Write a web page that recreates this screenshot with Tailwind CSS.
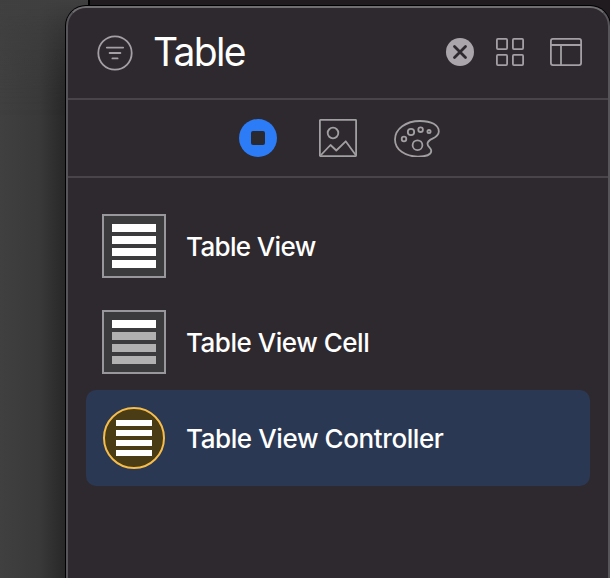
<!DOCTYPE html>
<html lang="en">
<head>
<meta charset="utf-8">
<title>Object Library</title>
<script src="https://cdn.jsdelivr.net/npm/@tailwindcss/browser@4"></script>
</head>
<body class="h-[578px] w-[610px] overflow-hidden bg-[#1f1b1e] font-['Inter','Liberation_Sans',sans-serif] text-white">
<div class="relative flex h-[578px] w-[610px] overflow-hidden">
  <div class="h-full w-[90px] border-r-2 border-black bg-linear-to-r from-[#404040] via-[#393939] via-45% to-[#272727] to-75%"></div>
  <div class="absolute left-0 top-0 h-[120px] w-[88px] bg-linear-to-b from-[#404040] to-transparent mask-b-from-0%"></div>
  <main class="absolute left-[66px] top-[6px] flex h-[600px] w-[544px] flex-col rounded-[20px] border-2 border-[#57545a] border-t-[#716e72] bg-[#2e292e] shadow-[0_0_0_1px_#000]">
    <header class="flex h-[92px] items-center border-b-2 border-[#48444a] pl-[28px] pr-[26px]">
      <svg class="size-[38px]" viewBox="0 0 38 38" fill="none" stroke="#a39fa4" stroke-width="1.8" stroke-linecap="round"><circle cx="19" cy="19" r="16.7"/><path d="M10.8 13.6h16.4M13.6 19h10.8M16.4 24.4h5.2"/></svg>
      <span class="ml-[19px] pb-[2px] text-[39px] leading-[48px] tracking-[-1.7px]">Table</span>
      <div class="ml-auto flex items-center pb-[2px]">
        <svg class="size-[28px]" viewBox="0 0 28 28"><circle cx="14" cy="14" r="14" fill="#aaa5ab"/><path d="M8.500 8.500l11 11M19.500 8.500l-11 11" stroke="#2e292e" stroke-width="2.8" stroke-linecap="round"/></svg>
        <svg class="ml-[22px] size-[28px]" viewBox="0 0 28 28" fill="none" stroke="#a39fa4" stroke-width="1.8"><rect x=".9" y=".9" width="10.200" height="10.200" rx="1"/><rect x="16.900" y=".9" width="10.200" height="10.200" rx="1"/><rect x=".9" y="16.900" width="10.200" height="10.200" rx="1"/><rect x="16.900" y="16.900" width="10.200" height="10.200" rx="1"/></svg>
        <svg class="ml-[26px] h-[28px] w-[32px]" viewBox="0 0 32 28" fill="none" stroke="#a39fa4" stroke-width="1.8"><rect x=".9" y=".9" width="30.200" height="26.200" rx="2"/><path d="M1 7h30M11 7v20"/></svg>
      </div>
    </header>
    <nav class="flex h-[78px] items-center gap-[42px] border-b-2 border-[#48444a] pl-[171px]">
      <div class="flex size-[38px] items-center justify-center rounded-full bg-[#2d7cf7]"><div class="size-[14px] rounded-[2px] bg-[#2b2930]"></div></div>
      <svg class="size-[38px]" viewBox="0 0 38 38" fill="none" stroke="#a19fa1" stroke-width="1.8" stroke-linejoin="round"><rect x=".9" y=".9" width="36.200" height="36.200" rx=".5"/><circle cx="14" cy="14" r="5.300"/><path d="M1.500 36.500L11.500 26l5.800 5.500L26.700 22.300 36.700 36"/></svg>
      <svg class="-ml-[5px] h-[38px] w-[46px]" viewBox="0 0 46 38" fill="none" stroke="#a19fa1" stroke-width="1.8"><path d="M26 2C12 2 1 10 1 20.500 1 30.500 11 37.600 24 37.600c8 0 13.300-2.200 13.300-5.600 0-3.200-3.800-4-3.800-7.300 0-5.700 11.300-4.500 11.300-12.200C44.800 6 37.500 2 26 2Z"/><circle cx="10" cy="20" r="2.300"/><circle cx="17" cy="13" r="3.200"/><circle cx="26.600" cy="10.700" r="2.300"/><circle cx="35" cy="12.600" r="1.600"/><circle cx="23.500" cy="26.200" r="4.900"/></svg>
    </nav>
    <ul class="flex flex-col px-[18px] pt-[20px] text-[26px] font-medium leading-[32px]">
      <li class="flex h-[96px] items-center pl-[16px]">
        <div class="flex size-[64px] flex-col items-center justify-center gap-[4px] border-2 border-[#98979c] bg-[#3b3b3d]"><i class="h-[8px] w-[44px] bg-white"></i><i class="h-[8px] w-[44px] bg-white"></i><i class="h-[8px] w-[44px] bg-white"></i><i class="h-[8px] w-[44px] bg-white"></i></div>
        <span class="ml-[20px] pt-[2px] tracking-[-0.65px]">Table View</span>
      </li>
      <li class="flex h-[96px] items-center pl-[16px]">
        <div class="flex size-[64px] flex-col items-center justify-center gap-[4px] border-2 border-[#98979c] bg-[#3b3b3d]"><i class="h-[8px] w-[44px] bg-white"></i><i class="h-[8px] w-[44px] bg-[#b1b1b1]"></i><i class="h-[8px] w-[44px] bg-[#b1b1b1]"></i><i class="h-[8px] w-[44px] bg-[#b1b1b1]"></i></div>
        <span class="ml-[20px] pt-[2px] tracking-[-0.48px]">Table View Cell</span>
      </li>
      <li class="flex h-[96px] items-center rounded-[10px] bg-[#2b3853] pl-[17px]">
        <div class="flex size-[62px] flex-col items-center justify-center gap-[4px] rounded-full border-2 border-[#f6bd4a] bg-[#4a3c14]"><i class="h-[6px] w-[36px] bg-white"></i><i class="h-[6px] w-[36px] bg-white"></i><i class="h-[6px] w-[36px] bg-white"></i><i class="h-[6px] w-[36px] bg-white"></i></div>
        <span class="ml-[21px] pt-[2px] tracking-[-0.4px]">Table View Controller</span>
      </li>
    </ul>
  </main>
</div>
</body>
</html>
